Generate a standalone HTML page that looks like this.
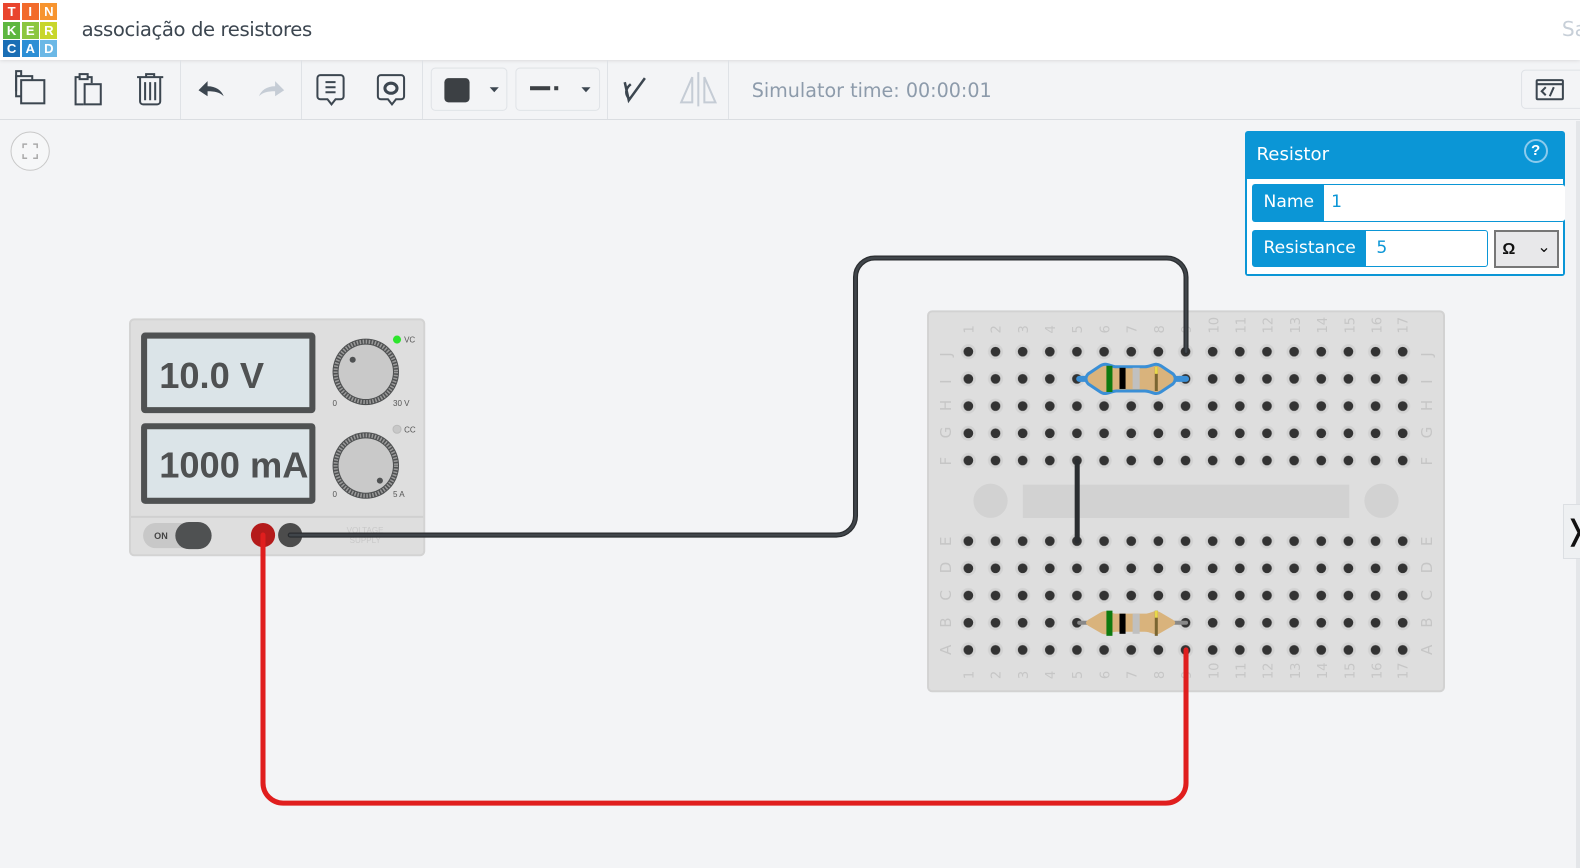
<!DOCTYPE html>
<html><head><meta charset="utf-8"><style>
*{margin:0;padding:0;box-sizing:border-box}
html,body{width:1580px;height:868px;overflow:hidden;background:#f3f4f6}
#w{width:1568px;height:862px;position:relative;zoom:1.00766;font-family:"Liberation Sans","DejaVu Sans",sans-serif}
.top{position:absolute;left:0;top:0;width:1568px;height:60px;background:#fff;box-shadow:0 1px 4px rgba(0,0,0,.12)}
.logo{position:absolute;left:3px;top:3px;width:54px;height:54px;display:grid;grid-template-columns:repeat(3,17px);grid-gap:1.5px}
.logo div{color:#fff;font-weight:bold;font-size:13px;text-align:center;line-height:17px;height:17px}
.title{position:absolute;left:81px;top:18px;font-size:19.5px;color:#3c4650;font-family:"DejaVu Sans",sans-serif;letter-spacing:-.4px}
.tb{position:absolute;left:0;top:60px;width:1568px;height:59px;border-bottom:1px solid #dadde1}
.sep{position:absolute;top:60px;width:1px;height:58px;background:#dfe2e6}
.sim{position:absolute;left:746px;top:78px;font-size:19px;color:#8d9bab;font-family:"DejaVu Sans",sans-serif}
.panel{position:absolute;left:1236px;top:130px;width:317px;height:144px;background:#0b96d6;border-radius:3px}
.panel .h{position:absolute;left:11px;top:13px;color:#fff;font-size:18px;font-family:"DejaVu Sans",sans-serif}
.panel .body{position:absolute;left:2px;top:48px;width:313px;height:94px;background:#fff}
.row{position:absolute;left:5px;height:37px;border:1px solid #0b96d6;border-radius:3px;background:#fff;font-family:"DejaVu Sans",sans-serif;font-size:17px}
.row .l{position:absolute;left:0;top:0;height:100%;background:#0b96d6;color:#fff;padding:0 10px;line-height:35px}
.row .v{position:absolute;top:0;line-height:35px;color:#0b96d6}
</style></head><body><div id="w">
<div class="top">
 <div class="logo">
  <div style="background:#e9452e">T</div><div style="background:#f26b2b">I</div><div style="background:#f7942f">N</div>
  <div style="background:#5eb740">K</div><div style="background:#8cc63f">E</div><div style="background:#c8d62c">R</div>
  <div style="background:#1a6eb5">C</div><div style="background:#2d8fd5">A</div><div style="background:#6bb8e6">D</div>
 </div>
 <div class="title">associação de resistores</div>
 <div style="position:absolute;left:1550px;top:17px;font-size:20px;color:#c7cfd8;font-family:'DejaVu Sans',sans-serif">Sa</div>
</div>
<div class="tb"></div>
<div class="sep" style="left:179px"></div><div class="sep" style="left:299px"></div><div class="sep" style="left:419px"></div><div class="sep" style="left:602px"></div><div class="sep" style="left:722px"></div>
<svg style="position:absolute;left:0;top:60px" width="1568" height="60" fill="none" stroke="#3c4650" stroke-width="2">
 <rect x="16" y="16" width="16" height="20"/><path d="M21 16V11h-5v20" /><rect x="21" y="20" width="23" height="23" fill="#f3f4f6"/>
 <path d="M80 17h-5v27h8M86 17h5v6"/><rect x="79" y="14" width="8" height="5"/><rect x="84" y="24" width="16" height="20"/>
 <path d="M136 17h26M145 17v-3h8v3M139 17v24a3 3 0 0 0 3 3h14a3 3 0 0 0 3-3V17M144 22v18M149 22v18M154 22v18"/>
 <path d="M197 30l9-9v5c8 0 14 4 16 10-4-4-9-5-16-5v5z" fill="#3c4650" stroke="none"/>
 <path d="M282 30l-9-9v5c-8 0-14 4-16 10 4-4 9-5 16-5v5z" fill="#c5ccd5" stroke="none"/>
 <path d="M318 15h20a3 3 0 0 1 3 3v18a3 3 0 0 1-3 3h-5l-4 5-4-5h-7a3 3 0 0 1-3-3V18a3 3 0 0 1 3-3zM323 22h10M323 27h10M323 32h10"/>
 <path d="M378 15h20a3 3 0 0 1 3 3v18a3 3 0 0 1-3 3h-5l-4 5-4-5h-7a3 3 0 0 1-3-3V18a3 3 0 0 1 3-3z"/><ellipse cx="388" cy="28" rx="6" ry="5" stroke-width="3"/>
 <rect x="428" y="8" width="75" height="42" rx="4" stroke="#e0e3e7" stroke-width="1" fill="#f3f4f6"/>
 <rect x="441" y="18" width="25" height="24" rx="4" fill="#3c4044" stroke="none"/><path d="M486 27h9l-4.5 5z" fill="#3c4650" stroke="none"/>
 <rect x="512" y="8" width="83" height="42" rx="4" stroke="#e0e3e7" stroke-width="1" fill="#f3f4f6"/>
 <rect x="526" y="26" width="20" height="4" fill="#3c4044" stroke="none"/><rect x="550" y="26" width="4" height="4" fill="#3c4044" stroke="none"/><path d="M577 27h9l-4.5 5z" fill="#3c4650" stroke="none"/>
 <path d="M620 22l4 18 16-22M626 24c-5 4-6 9-2 14" stroke-width="2.5"/>
 <path d="M676 42l11-25v25zM710 42l-11-25v25zM693 12v34" stroke="#c5ccd5"/>
 <rect x="1510" y="10" width="80" height="38" rx="4" stroke="#dfe2e6" stroke-width="1" fill="#f3f4f6"/>
 <rect x="1525" y="20" width="26" height="19" rx="1"/><path d="M1525 24h26M1534 27l-4 4 4 4M1538 36l4-9"/>
</svg>
<div class="sim">Simulator time: 00:00:01</div>
<svg style="position:absolute;left:10px;top:130px" width="40" height="40"><circle cx="20" cy="20" r="19" fill="#f6f7f8" stroke="#c8c8c8"/><path d="M13 17v-4h4M23 13h4v4M27 23v4h-4M17 27h-4v-4" stroke="#aaa" fill="none" stroke-width="1.5"/></svg>
<div style="position:absolute;left:1564px;top:120px;width:5px;height:748px;background:#e4e6e9"></div>
<div style="position:absolute;left:1551px;top:500px;width:22px;height:55px;background:#eef0f2;border:1px solid #dcdfe3;font-size:28px;line-height:50px;text-align:center;color:#111">❭</div>

<svg style="position:absolute;left:0;top:0" width="1568" height="862">
<defs>
 <pattern id="h1" patternUnits="userSpaceOnUse" x="947.5" y="335.5" width="26.94" height="27"><circle cx="13.5" cy="13.5" r="7.5" fill="#d2d2d2"/><circle cx="13.5" cy="13.5" r="4.8" fill="#333"/></pattern>
 <pattern id="h2" patternUnits="userSpaceOnUse" x="947.5" y="523.5" width="26.94" height="27"><circle cx="13.5" cy="13.5" r="7.5" fill="#d2d2d2"/><circle cx="13.5" cy="13.5" r="4.8" fill="#333"/></pattern>
</defs>
<rect x="921" y="309" width="512" height="377" rx="4" fill="#dedede" stroke="#d2d2d2" stroke-width="2"/>
<rect x="947" y="335" width="458" height="135" fill="url(#h1)"/>
<rect x="947" y="523" width="458" height="135" fill="url(#h2)"/>
<rect x="1015" y="481" width="324" height="33" fill="#d2d2d2"/>
<circle cx="983" cy="497" r="17" fill="#d2d2d2"/><circle cx="1371" cy="497" r="17" fill="#d2d2d2"/>
<g fill="#c6c6c6" font-size="13" font-family="DejaVu Sans">
<text transform="translate(966,331) rotate(-90)">1</text><text transform="translate(993,331) rotate(-90)">2</text><text transform="translate(1020,331) rotate(-90)">3</text><text transform="translate(1047,331) rotate(-90)">4</text><text transform="translate(1074,331) rotate(-90)">5</text><text transform="translate(1101,331) rotate(-90)">6</text><text transform="translate(1128,331) rotate(-90)">7</text><text transform="translate(1155,331) rotate(-90)">8</text><text transform="translate(1182,331) rotate(-90)">9</text><text transform="translate(1209,331) rotate(-90)">10</text><text transform="translate(1236,331) rotate(-90)">11</text><text transform="translate(1263,331) rotate(-90)">12</text><text transform="translate(1290,331) rotate(-90)">13</text><text transform="translate(1317,331) rotate(-90)">14</text><text transform="translate(1344,331) rotate(-90)">15</text><text transform="translate(1371,331) rotate(-90)">16</text><text transform="translate(1397,331) rotate(-90)">17</text>
<text transform="translate(966,674) rotate(-90)">1</text><text transform="translate(993,674) rotate(-90)">2</text><text transform="translate(1020,674) rotate(-90)">3</text><text transform="translate(1047,674) rotate(-90)">4</text><text transform="translate(1074,674) rotate(-90)">5</text><text transform="translate(1101,674) rotate(-90)">6</text><text transform="translate(1128,674) rotate(-90)">7</text><text transform="translate(1155,674) rotate(-90)">8</text><text transform="translate(1182,674) rotate(-90)">9</text><text transform="translate(1209,674) rotate(-90)">10</text><text transform="translate(1236,674) rotate(-90)">11</text><text transform="translate(1263,674) rotate(-90)">12</text><text transform="translate(1290,674) rotate(-90)">13</text><text transform="translate(1317,674) rotate(-90)">14</text><text transform="translate(1344,674) rotate(-90)">15</text><text transform="translate(1371,674) rotate(-90)">16</text><text transform="translate(1397,674) rotate(-90)">17</text>
<g font-size="15">
<text transform="translate(944,354) rotate(-90)">J</text><text transform="translate(944,381) rotate(-90)">I</text><text transform="translate(944,408) rotate(-90)">H</text><text transform="translate(944,435) rotate(-90)">G</text><text transform="translate(944,462) rotate(-90)">F</text>
<text transform="translate(944,542) rotate(-90)">E</text><text transform="translate(944,569) rotate(-90)">D</text><text transform="translate(944,596) rotate(-90)">C</text><text transform="translate(944,623) rotate(-90)">B</text><text transform="translate(944,650) rotate(-90)">A</text>
<text transform="translate(1421,354) rotate(-90)">J</text><text transform="translate(1421,381) rotate(-90)">I</text><text transform="translate(1421,408) rotate(-90)">H</text><text transform="translate(1421,435) rotate(-90)">G</text><text transform="translate(1421,462) rotate(-90)">F</text>
<text transform="translate(1421,542) rotate(-90)">E</text><text transform="translate(1421,569) rotate(-90)">D</text><text transform="translate(1421,596) rotate(-90)">C</text><text transform="translate(1421,623) rotate(-90)">B</text><text transform="translate(1421,650) rotate(-90)">A</text>
</g></g>
<rect x="129" y="317" width="292" height="234" rx="4" fill="#dedede" stroke="#d3d3d3" stroke-width="2"/>
<line x1="130" y1="513" x2="420" y2="513" stroke="#d0d0d0" stroke-width="2"/>
<rect x="143" y="333" width="167" height="74" fill="#dbe4e8" stroke="#4f5152" stroke-width="6" rx="1"/>
<rect x="143" y="423" width="167" height="74" fill="#dbe4e8" stroke="#4f5152" stroke-width="6" rx="1"/>
<text x="158" y="385" font-size="36" font-weight="bold" fill="#4f5152">10.0 V</text>
<text x="158" y="474" font-size="36" font-weight="bold" fill="#4f5152">1000 mA</text>
<circle cx="363" cy="369" r="33" fill="#4f5152"/><circle cx="363" cy="369" r="30" fill="none" stroke="#9a9a9a" stroke-width="4" stroke-dasharray="1.5 1.5"/><circle cx="363" cy="369" r="27" fill="#c9c9c9"/><circle cx="350" cy="357" r="3" fill="#4f5152"/>
<circle cx="363" cy="462" r="33" fill="#4f5152"/><circle cx="363" cy="462" r="30" fill="none" stroke="#9a9a9a" stroke-width="4" stroke-dasharray="1.5 1.5"/><circle cx="363" cy="462" r="27" fill="#c9c9c9"/><circle cx="377" cy="477" r="3" fill="#4f5152"/>
<circle cx="394" cy="337" r="4" fill="#2ce52c"/><circle cx="394" cy="426" r="4" fill="#c8c8c8" stroke="#bbb"/>
<g font-size="8" fill="#555"><text x="401" y="340">VC</text><text x="401" y="429">CC</text><text x="330" y="403">0</text><text x="390" y="403">30 V</text><text x="330" y="493">0</text><text x="390" y="493">5 A</text></g>
<rect x="142" y="519" width="68" height="25" rx="12.5" fill="#c8c8c8"/><rect x="174" y="518" width="36" height="27" rx="13.5" fill="#4f5152"/>
<text x="153" y="535" font-size="9" font-weight="bold" fill="#444">ON</text>
<text x="344" y="529" font-size="8" fill="#c8c8c8">VOLTAGE</text><text x="347" y="539" font-size="8" fill="#c8c8c8">SUPPLY</text>
<circle cx="261" cy="531" r="12" fill="#b41b1b"/><circle cx="288" cy="531" r="12" fill="#4c4c4c"/>
<g fill="none" stroke-linecap="round" stroke-linejoin="round">
<path d="M288 531H830a19 19 0 0 0 19-19V275a19 19 0 0 1 19-19H1158a19 19 0 0 1 19 19V349" stroke="#2a2d30" stroke-width="5"/>
<path d="M288 531H830a19 19 0 0 0 19-19V275a19 19 0 0 1 19-19H1158a19 19 0 0 1 19 19V349" stroke="#40454a" stroke-width="2.5"/>
<path d="M261 531V777a20 20 0 0 0 20 20H1157a20 20 0 0 0 20-20V645" stroke="#e01e1e" stroke-width="5"/>
<path d="M1069 458V537" stroke="#2a2d30" stroke-width="5"/>
</g>
<g>
<path d="M1071 376H1084M1162 376H1177" stroke="#3a8fd6" stroke-width="6" stroke-linecap="round"/>
<path d="M1092 363c6-4 10 1 16 1h28c7 0 10-5 16-1l12 8c3 3 3 7 0 10l-12 8c-6 4-9-1-16-1h-28c-6 0-10 5-16 1l-12-8c-3-3-3-7 0-10z" fill="#d9b37c" stroke="#3a8fd6" stroke-width="3"/>
<rect x="1098" y="363" width="6" height="26" fill="#0f7a0f"/><rect x="1111" y="365" width="6" height="21" fill="#000"/><rect x="1124" y="365" width="7" height="21" fill="#c0c0c0"/><rect x="1146" y="364" width="3" height="24" fill="#7a6530"/><rect x="1146" y="364" width="3" height="7" fill="#e8d84a"/>
</g>
<g>
<path d="M1071 618H1088M1160 618H1177" stroke="#888" stroke-width="4" stroke-linecap="round"/>
<path d="M1092 608c6-4 10 1 16 1h28c7 0 10-5 16-1l12 7c3 2 3 4 0 6l-12 7c-6 4-9-1-16-1h-28c-6 0-10 5-16 1l-12-7c-3-2-3-4 0-6z" fill="#d9b37c"/>
<rect x="1098" y="606" width="6" height="25" fill="#0f7a0f"/><rect x="1111" y="609" width="6" height="20" fill="#000"/><rect x="1124" y="609" width="7" height="20" fill="#c0c0c0"/><rect x="1146" y="606" width="3" height="25" fill="#7a6530"/><rect x="1146" y="606" width="3" height="7" fill="#e8d84a"/>
</g>
</svg>

<div class="panel">
 <div class="h">Resistor</div>
 <div style="position:absolute;left:276px;top:8px;width:24px;height:24px;border:2px solid #8ccbed;border-radius:50%;color:#fff;font-weight:bold;font-size:15px;text-align:center;line-height:20px">?</div>
 <div class="body">
  <div class="row" style="top:5px;width:310px;border-right:none"><div class="l">Name</div><div class="v" style="left:77px">1</div></div>
  <div class="row" style="top:50px;width:234px"><div class="l">Resistance</div><div class="v" style="left:122px">5</div></div>
  <div style="position:absolute;left:245px;top:50px;width:64px;height:38px;background:#e8e8ea;border:2px solid #777;font-size:16px;font-weight:bold;padding:8px 6px;color:#111">Ω<span style="position:absolute;right:6px;top:5px;font-weight:normal;font-size:16px">⌄</span></div>
 </div>
</div>
</div></body></html>
